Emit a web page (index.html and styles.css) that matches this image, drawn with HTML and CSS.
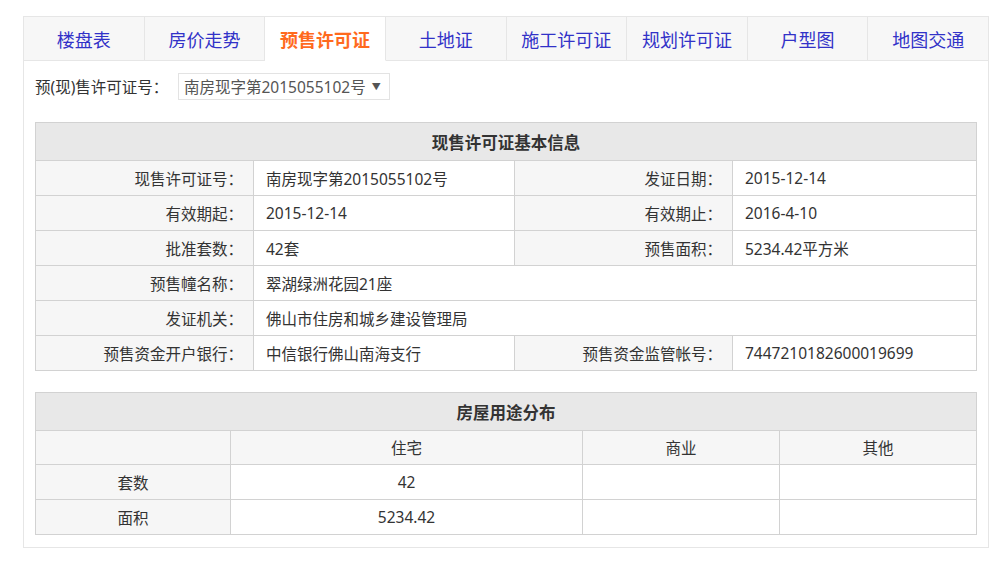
FILE: index.html
```html
<!DOCTYPE html>
<html lang="zh-CN">
<head>
<meta charset="utf-8">
<title>预售许可证</title>
<link rel="stylesheet" href="styles.css">
</head>
<body>
<div class="panel">
  <div class="tabs">
    <div class="tab">楼盘表</div>
    <div class="tab">房价走势</div>
    <div class="tab active">预售许可证</div>
    <div class="tab">土地证</div>
    <div class="tab">施工许可证</div>
    <div class="tab">规划许可证</div>
    <div class="tab">户型图</div>
    <div class="tab">地图交通</div>
  </div>
  <div class="content">
    <div class="picker">
      <span class="picker-label">预(现)售许可证号：</span>
      <span class="select">南房现字第2015055102号<span class="caret">▼</span></span>
    </div>
    <table class="info">
      <colgroup>
        <col class="c-l1"><col class="c-v1"><col class="c-l2"><col class="c-v2">
      </colgroup>
      <tr><th colspan="4" class="title">现售许可证基本信息</th></tr>
      <tr><td class="lbl">现售许可证号：</td><td class="val">南房现字第2015055102号</td><td class="lbl">发证日期：</td><td class="val">2015-12-14</td></tr>
      <tr><td class="lbl">有效期起：</td><td class="val">2015-12-14</td><td class="lbl">有效期止：</td><td class="val">2016-4-10</td></tr>
      <tr><td class="lbl">批准套数：</td><td class="val">42套</td><td class="lbl">预售面积：</td><td class="val">5234.42平方米</td></tr>
      <tr><td class="lbl">预售幢名称：</td><td class="val" colspan="3">翠湖绿洲花园21座</td></tr>
      <tr><td class="lbl">发证机关：</td><td class="val" colspan="3">佛山市住房和城乡建设管理局</td></tr>
      <tr><td class="lbl">预售资金开户银行：</td><td class="val">中信银行佛山南海支行</td><td class="lbl">预售资金监管帐号：</td><td class="val">7447210182600019699</td></tr>
    </table>
    <table class="usage">
      <colgroup>
        <col class="u-1"><col class="u-2"><col class="u-3"><col class="u-4">
      </colgroup>
      <tr><th colspan="4" class="title">房屋用途分布</th></tr>
      <tr class="head"><td></td><td>住宅</td><td>商业</td><td>其他</td></tr>
      <tr><td class="rowhead">套数</td><td>42</td><td></td><td></td></tr>
      <tr><td class="rowhead">面积</td><td>5234.42</td><td></td><td></td></tr>
    </table>
  </div>
</div>
</body>
</html>
```

FILE: styles.css
```css
* { box-sizing: border-box; }
html, body { margin: 0; padding: 0; background: #ffffff; }
body {
  font-family: "Noto Sans", "Noto Sans CJK SC", sans-serif;
  font-size: 15.5px;
  color: #333333;
  padding: 16px 12px 0 23px;
}
.panel {
  width: 966px;
  border: 1px solid #e6e6e6;
  border-top: none;
}
.tabs {
  display: flex;
  height: 45px;
  border-top: 1px solid #e6e6e6;
}
.tab {
  flex: 1;
  display: flex;
  align-items: center;
  justify-content: center;
  background: #f7f7f7;
  border-right: 1px solid #e6e6e6;
  border-bottom: 1px solid #e6e6e6;
  color: #3232c8;
  font-size: 18px;
}
.tab:last-child { border-right: none; }
.tab.active {
  background: #ffffff;
  border-bottom-color: #ffffff;
  color: #ff6a1e;
  font-weight: bold;
}
.content {
  padding: 11px 11px 12px 11px;
}
.picker {
  display: flex;
  align-items: center;
  height: 28px;
}
.picker-label { color: #333; width: 143px; white-space: nowrap; }
.select {
  display: inline-flex;
  align-items: center;
  height: 27px;
  padding: 0 8px 0 5px;
  border: 1px solid #e3e3e3;
  color: #555555;
}
.caret {
  font-size: 9px;
  margin-left: 6px;
  color: #555;
}
table {
  width: 941px;
  border-collapse: collapse;
  table-layout: fixed;
}
td, th {
  border: 1px solid #d2d2d2;
  height: 35px;
  padding: 0;
  font-size: 15.5px;
  white-space: nowrap;
}
th.title {
  background: #e8e8e8;
  height: 38px;
  font-size: 16.5px;
  font-weight: bold;
  color: #333;
  text-align: center;
}
.info { margin-top: 22px; }
.c-l1 { width: 218px; }
.c-v1 { width: 261px; }
.c-l2 { width: 218px; }
.c-v2 { width: 244px; }
.lbl {
  background: #f6f6f6;
  text-align: right;
  padding-right: 10px;
}
.val {
  background: #ffffff;
  text-align: left;
  padding-left: 12px;
}
.usage { margin-top: 21px; }
.u-1 { width: 195px; }
.u-2 { width: 352px; }
.u-3 { width: 197px; }
.u-4 { width: 197px; }
.usage td { text-align: center; background: #ffffff; }
.usage tr.head td { background: #f6f6f6; height: 34px; }
.usage td.rowhead { background: #f6f6f6; }
```
